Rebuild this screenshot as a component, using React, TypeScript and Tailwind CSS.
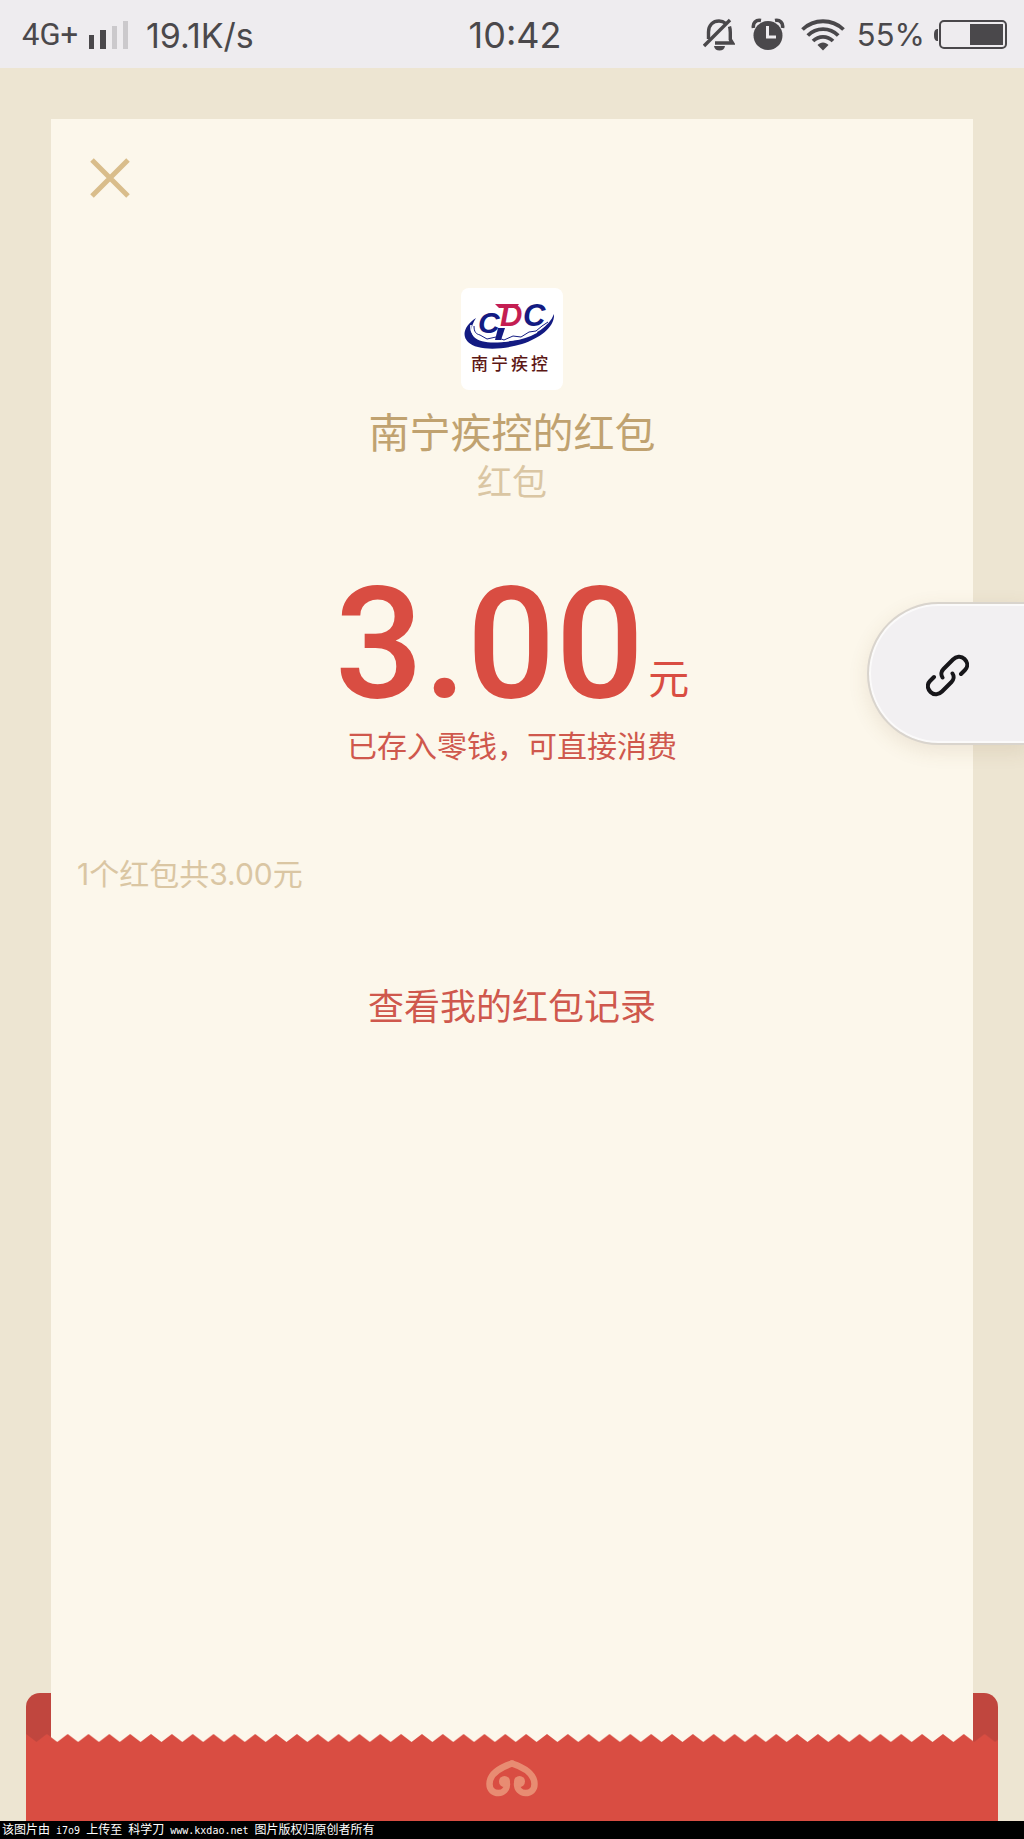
import React from 'react';

const SignalIcon = () => (
  <svg width="40" height="28" viewBox="0 0 40 28" aria-hidden="true">
    <rect x="0" y="14" width="5" height="14" fill="#4a484b" />
    <rect x="11" y="9" width="6" height="19" fill="#4a484b" />
    <rect x="23" y="5" width="5" height="23" fill="#cbc9cc" />
    <rect x="34" y="0" width="5" height="28" fill="#cbc9cc" />
  </svg>
);

const MutedBellIcon = () => (
  <svg width="32" height="34" viewBox="0 0 32 34" fill="none" aria-hidden="true">
    <path d="M5.500 21V14C5.500 7 10 3 16 3c3 0 5 1 7 2.500M26.500 8.500c.7 2 .8 4 .8 6v7l2.200 3.500H12" stroke="#4a484b" strokeWidth="3.400" />
    <path d="M1 28 27 2" stroke="#4a484b" strokeWidth="3.400" />
    <path d="M11 28h11c-.5 3-2.500 4.500-5.500 4.500S11.500 31 11 28Z" fill="#4a484b" />
  </svg>
);

const AlarmIcon = () => (
  <svg width="34" height="34" viewBox="0 0 34 34" fill="none" aria-hidden="true">
    <circle cx="17" cy="17.500" r="14.500" fill="#4a484b" />
    <path d="M2.500 10C1.500 5 5 1.500 10 2.500M31.500 10c1-5-2.500-8.500-7.500-7.500" stroke="#4a484b" strokeWidth="3.600" />
    <path d="M16.500 8v11H25" stroke="#eeecef" strokeWidth="3" />
  </svg>
);

const WifiIcon = () => (
  <svg width="44" height="32" viewBox="0 0 44 32" fill="none" stroke="#4a484b" strokeWidth="3.800" aria-hidden="true">
    <path d="M1.500 10.500C13-.5 31-.5 42.500 10.500" />
    <path d="M6.800 16.500c8.500-8.500 22-8.500 30.400 0" />
    <path d="M12 22c5.800-5.600 14.200-5.600 20 0" />
    <path d="M16.500 26c3-3.500 8-3.500 11 0L22 31.500Z" fill="#4a484b" stroke="none" />
  </svg>
);

const BatteryIcon = () => (
  <svg width="74" height="30" viewBox="0 0 74 30" fill="none" aria-hidden="true">
    <path d="M4 9v12C1 21 0 19 0 15s1-6 4-6Z" fill="#4a484b" />
    <rect x="6" y="1" width="66" height="27" rx="4" stroke="#4a484b" strokeWidth="2" />
    <rect x="36" y="4" width="33" height="21" fill="#4a484b" />
  </svg>
);

const StatusBar = () => (
  <header className="grid h-[68px] grid-cols-[1fr_auto_1fr] items-center bg-[#eeecef] pt-[2px] pr-4 pl-[22px] font-['Inter',sans-serif] text-[#4a484b]">
    <div className="flex items-center">
      <span className="w-[67px] font-['Roboto',sans-serif] text-[31px]">4G+</span>
      <SignalIcon />
      <span className="ml-[17px] text-[34px]">19.1K/s</span>
    </div>
    <time className="text-[36px]">10:42</time>
    <div className="flex items-center justify-end">
      <MutedBellIcon />
      <span className="ml-4"><AlarmIcon /></span>
      <span className="ml-4"><WifiIcon /></span>
      <span className="ml-3 text-[31px]">55%</span>
      <span className="ml-[9px]"><BatteryIcon /></span>
    </div>
  </header>
);

const SenderLogo = () => (
  <svg className="size-[102px] rounded-lg bg-white" viewBox="0 0 102 102" role="img" aria-label="南宁疾控">
    <path d="M15 30C4 37 0 47 7 54c9 9 35 8 54 2 18-6 33-17 32-30-5 13-19 21-35 25-19 5-38 5-45-2-4-5-3-11 2-19Z" fill="#131b82" />
    <path d="M10 37c-1 9 4 13 13 15 18 3 39 0 53-8" fill="none" stroke="#fff" strokeWidth="1.500" />
    <path d="M13 38c0 6 2 8 6 9l7 4 9-2 8 3 9-4 8 1 8-5 7-1 6-5 6-4" fill="none" stroke="#131b82" strokeWidth="1" />
    <g fontFamily="Liberation Sans, sans-serif" fontStyle="italic" fontWeight="700">
      <text x="17" y="45" fontSize="30" fill="#131b82">C</text>
      <text x="39" y="38" fontSize="31" fill="#c41e52">D</text>
      <text x="62" y="38" fontSize="31" fill="#131b82">C</text>
    </g>
    <path d="M34 16h24l-3 4H38Z" fill="#c41e52" />
    <path d="M37 40h7l-4 12h-6Z" fill="#131b82" />
    <text x="10" y="82" fontSize="17" fontWeight="500" fill="#5c1714" fontFamily="Noto Sans CJK SC, sans-serif">
      <tspan x="10">南</tspan>
      <tspan x="30">宁</tspan>
      <tspan x="50">疾</tspan>
      <tspan x="70">控</tspan>
    </text>
  </svg>
);

// Serrated edge along the mouth of the envelope
const TornEdge = () => (
  <svg className="-mt-2 block h-2 w-full" aria-hidden="true">
    <defs>
      <pattern id="teeth" width="20.84" height="8" patternUnits="userSpaceOnUse">
        <path d="M0 8V0l10.420 8L20.840 0v8Z" fill="#d94d42" />
      </pattern>
    </defs>
    <rect width="100%" height="8" fill="url(#teeth)" />
  </svg>
);

const Ornament = () => (
  <svg width="52" height="38" viewBox="0 0 52 38" fill="none" stroke="#e88c72" strokeLinecap="round" aria-hidden="true">
    <path d="M26 4.500C14 8.500 3.500 15 3.500 25c0 6 4 9 9 9 5 0 8.500-4 8.500-9" strokeWidth="6.500" />
    <path d="M26 4.500c12 4 22.500 10.500 22.500 20.500 0 6-4 9-9 9-5 0-8.500-4-8.500-9" strokeWidth="6.500" />
    <circle cx="18.500" cy="22.500" r="5.500" fill="#e88c72" stroke="none" />
    <circle cx="33.500" cy="22.500" r="5.500" fill="#e88c72" stroke="none" />
  </svg>
);

const Envelope = () => (
  <footer className="mx-[26px]">
    <div className="h-[49px] rounded-t-[14px] bg-[#c0463e] px-[25px]">
      <div className="h-full bg-[#fcf7eb]" />
    </div>
    <TornEdge />
    <div className="flex h-[79px] justify-center bg-[#d94d42] pt-[17px]">
      <Ornament />
    </div>
  </footer>
);

const FloatingLink = () => (
  <button
    type="button"
    aria-label="链接"
    className="absolute top-[602px] -right-1 h-[143px] w-[161px] rounded-l-full border-2 border-r-0 border-[#d9d4cd] bg-[#f2f0f2] pl-[57px] shadow-[0_6px_20px_rgba(120,90,50,0.12),inset_0_0_0_2px_#fbfafa]"
  >
    <svg className="mt-1" width="43" height="43" viewBox="0 0 43 43" fill="none" stroke="#17161a" strokeWidth="4" strokeLinecap="round" strokeLinejoin="round" aria-hidden="true">
      <path d="M16.500 23.500c-2-3-1-6.500 1-8.500L27 5.500c3-3 8-4 11.500-.5s3.500 8 .5 11L35 20" />
      <path d="M26.500 19.500c2 3 1 6.500-1 8.500L16 37.500c-3 3-8 4-11.500.5s-3.500-8-.5-11L8 23" />
    </svg>
  </button>
);

export default function App() {
  return (
    <div className="relative flex min-h-screen flex-col overflow-hidden bg-[#ede5d2] font-['Noto_Sans_CJK_SC',sans-serif]">
      <StatusBar />
      <main className="mx-[51px] mt-[51px] flex flex-1 flex-col bg-[#fcf7eb]">
        <div className="px-[38px] pt-[38px]">
          <button type="button" aria-label="关闭" className="block">
            <svg width="42" height="42" viewBox="0 0 42 42" stroke="#d9bd8b" strokeWidth="5" aria-hidden="true">
              <path d="M3 3 39 39M39 3 3 39" />
            </svg>
          </button>
        </div>
        <section className="flex flex-col items-center pt-[89px]">
          <SenderLogo />
          <h1 className="mt-4 text-[41px] leading-[48px] text-[#c0a270]">南宁疾控的红包</h1>
          <p className="mt-[2px] text-[35px] leading-[48px] text-[#dac6a3]">红包</p>
          <p className="mt-[60px] flex items-end text-[#d94d42]">
            <span className="font-['Roboto',sans-serif] text-[156px] leading-[160px] font-medium">3.00</span>
            <span className="mb-6 ml-1 text-[41px] leading-[48px]">元</span>
          </p>
          <p className="text-[30px] leading-[40px] text-[#cf584d]">已存入零钱，可直接消费</p>
        </section>
        <p className="mt-[90px] pl-[26px] font-['Inter','Noto_Sans_CJK_SC',sans-serif] text-[30px] leading-[40px] text-[#dac6a3]">
          1个红包共3.00元
        </p>
        <a href="#records" className="mt-[86px] self-center text-[36px] leading-[48px] text-[#cf584d]">
          查看我的红包记录
        </a>
      </main>
      <Envelope />
      <p className="h-[18px] bg-black pl-[2px] font-['DejaVu_Sans_Mono',monospace] text-[10px] leading-[18px] whitespace-pre text-white">
        <span className="font-['Noto_Sans_CJK_SC',sans-serif] text-xs leading-[16px]">该图片由</span> i7o9{' '}
        <span className="font-['Noto_Sans_CJK_SC',sans-serif] text-xs leading-[16px]">上传至</span>{' '}
        <span className="font-['Noto_Sans_CJK_SC',sans-serif] text-xs leading-[16px]">科学刀</span> www.kxdao.net{' '}
        <span className="font-['Noto_Sans_CJK_SC',sans-serif] text-xs leading-[16px]">图片版权归原创者所有</span>
      </p>
      <FloatingLink />
    </div>
  );
}
